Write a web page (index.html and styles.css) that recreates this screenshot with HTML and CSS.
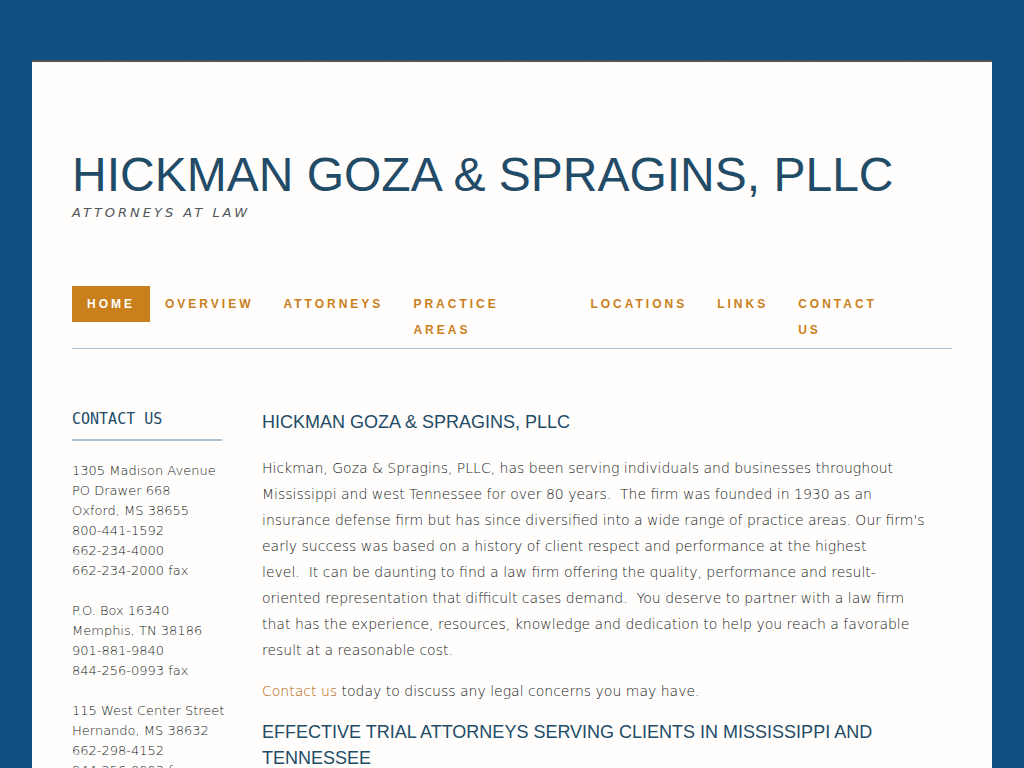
FILE: index.html
```html
<!DOCTYPE html>
<html lang="en">
<head>
    <meta charset="UTF-8">
    <meta name="viewport" content="width=device-width, initial-scale=1.0">
    <title>Hickman Goza &amp; Spragins, PLLC</title>
    <link rel="stylesheet" href="styles.css">
</head>
<body>
    <div class="page">
        <header class="site-header">
            <h1 class="site-title">Hickman Goza &amp; Spragins, PLLC</h1>
            <p class="tagline">Attorneys at Law</p>
        </header>
        <nav class="main-nav">
            <a class="active" href="#">Home</a>
            <a href="#">Overview</a>
            <a href="#">Attorneys</a>
            <a class="two-line" href="#">Practice<br>Areas</a>
            <a href="#">Locations</a>
            <a href="#">Links</a>
            <a href="#">Contact<br>Us</a>
        </nav>
        <div class="columns">
            <aside class="sidebar">
                <h2>Contact Us</h2>
                <address>
                    1305 Madison Avenue<br>
                    PO Drawer 668<br>
                    Oxford, MS 38655<br>
                    800-441-1592<br>
                    662-234-4000<br>
                    662-234-2000 fax
                </address>
                <address>
                    P.O. Box 16340<br>
                    Memphis, TN 38186<br>
                    901-881-9840<br>
                    844-256-0993 fax
                </address>
                <address>
                    115 West Center Street<br>
                    Hernando, MS 38632<br>
                    662-298-4152<br>
                    844-256-0993 fax
                </address>
            </aside>
            <main class="content">
                <h2>Hickman Goza &amp; Spragins, PLLC</h2>
                <p>Hickman, Goza &amp; Spragins, PLLC, has been serving individuals and businesses throughout Mississippi and west Tennessee for over 80 years.&nbsp; The firm was founded in 1930 as an insurance defense firm but has since diversified into a wide range of practice areas. Our firm's early success was based on a history of client respect and performance at the highest<br>level.&nbsp; It can be daunting to find a law firm offering the quality, performance and result-oriented representation that difficult cases demand.&nbsp; You deserve to partner with a law firm that has the experience, resources, knowledge and dedication to help you reach a favorable result at a reasonable cost.</p>
                <p><a href="#">Contact us</a> today to discuss any legal concerns you may have.</p>
                <h2>Effective Trial Attorneys Serving Clients in Mississippi and Tennessee</h2>
            </main>
        </div>
    </div>
</body>
</html>
```
FILE: styles.css
```css
* {
    box-sizing: border-box;
}
body {
    margin: 0;
    padding: 60px 32px 0;
    background-color: #105488;
    /* fine paper grain */
    background-image: url("data:image/svg+xml,%3Csvg xmlns='http://www.w3.org/2000/svg' width='200' height='200'%3E%3Cfilter id='n' x='0' y='0' width='1' height='1'%3E%3CfeTurbulence type='fractalNoise' baseFrequency='.4' numOctaves='2' stitchTiles='stitch'/%3E%3CfeColorMatrix values='0 0 0 0 0 0 0 0 0 0 0 0 0 0 0 .14 0 0 0 -.03'/%3E%3C/filter%3E%3Crect width='200' height='200' filter='url(%23n)'/%3E%3C/svg%3E");
    color: #181c20;
    font-family: "DejaVu Sans Light", "DejaVu Sans", sans-serif;
    font-size: 14px;
    font-weight: 200;
    line-height: 26px;
}
a {
    color: #c97f1b;
    text-decoration: none;
}
h1, h2, p {
    margin: 0;
}
.page {
    padding: 84px 40px 40px;
    background: #fffefd;
    border-top: 2px solid #51565b;
}
.site-title {
    color: #224b67;
    font-family: Helvetica, "Liberation Sans", sans-serif;
    font-size: 48px;
    font-weight: normal;
    line-height: 58px;
    text-transform: uppercase;
}
.tagline {
    color: #51565b;
    font-family: "DejaVu Sans", sans-serif;
    font-size: 13px;
    font-style: italic;
    letter-spacing: 3px;
    line-height: 18px;
    text-transform: uppercase;
}
.main-nav {
    display: flex;
    align-items: flex-start;
    margin-top: 64px;
    border-bottom: 1px solid #afbfce;
    font-family: Helvetica, "Liberation Sans", sans-serif;
    font-size: 12px;
    font-weight: bold;
    letter-spacing: 3px;
    text-transform: uppercase;
}
.main-nav a {
    padding: 5px 15px;
}
.main-nav .active {
    background: #c97f1b;
    color: #fffefd;
}
.main-nav .two-line {
    width: 177px;
}
.columns {
    display: grid;
    grid-template-columns: 150px 1fr;
    gap: 40px;
    margin-top: 60px;
}
.sidebar h2 {
    margin-bottom: 20px;
    padding-bottom: 10px;
    border-bottom: 2px solid #afbfce;
    color: #224b67;
    font-family: "DejaVu Sans Mono", monospace;
    font-size: 15px;
    font-weight: normal;
    line-height: 20px;
    text-transform: uppercase;
}
.sidebar address {
    margin-bottom: 20px;
    font-size: 13px;
    font-style: normal;
    line-height: 20px;
    white-space: nowrap;
}
.content h2 {
    color: #224b67;
    font-family: Helvetica, "Liberation Sans", sans-serif;
    font-size: 18px;
    font-weight: normal;
    text-transform: uppercase;
}
.content h2:first-child {
    margin-bottom: 20px;
}
.content p {
    margin-bottom: 15px;
    padding-right: 22px;
}
.content p a {
    color: #b06000;
}
```
